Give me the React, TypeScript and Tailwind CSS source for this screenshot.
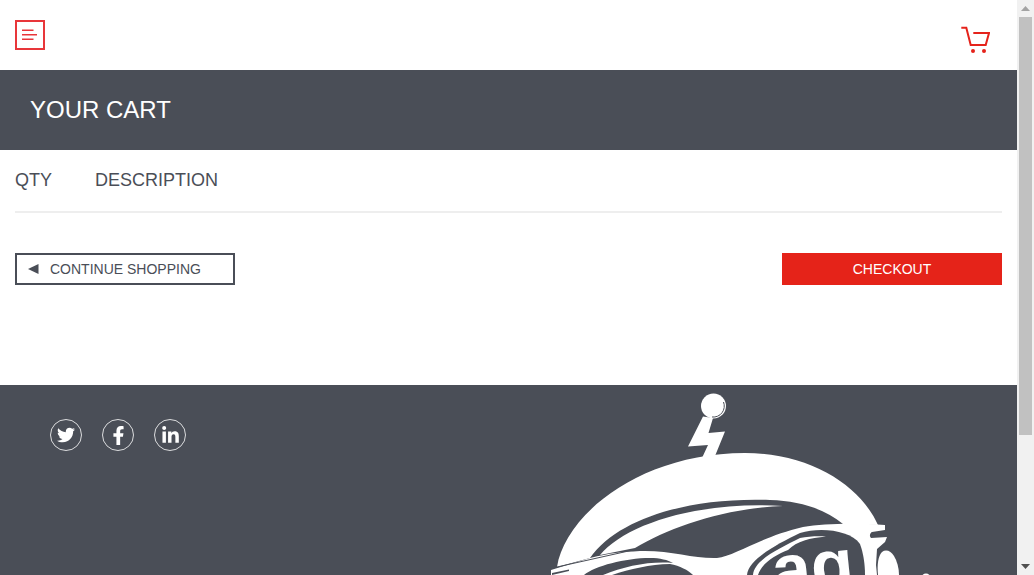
import { FaTwitter, FaFacebookF, FaLinkedinIn } from "react-icons/fa";

function Logo() {
  const bg = "#4a4e57";
  return (
    <svg className="absolute left-[540px] top-0" width="400" height="190" viewBox="540 385 400 190">
      <circle cx="713.5" cy="406" r="12.5" fill="white" />
      <path d="M723.5,402 A11,11 0 0 1 712,417" stroke={bg} strokeWidth="1" fill="none" />
      <path d="M703,416.5 L713,418 L708.5,433 L725,431.5 L715,456 L702,458 L708,445 L688,446.5 Z" fill="white" />
      {/* dome */}
      <path
        d="M557,567 C565,515 640,453 745,453 C810,453 860,485 878,525 L843,524 C825,509 800,501 770,500 C690,497 618,518 590,558 Z"
        fill="white"
      />
      {/* swoosh */}
      <path
        d="M600,555 C625,525 695,501 783,506 C725,508 670,527 635,548 Z"
        fill="white"
      />
      {/* goggles */}
      <path
        d="M551,570 L590,558 C610,553 622,552 640,551 C670,550 695,559 717,558 C735,556 760,537 803,527 C825,523 860,523 885,525 L885,530 L872,532 C870,533 869,536 871,538 L887,537 L885,542 L877,549 L876,565 L877,575 L551,575 Z"
        fill="white"
      />
      <path d="M557,567 L633,550" stroke={bg} strokeWidth="1" fill="none" />
      <path d="M552,573 L569,569.5 L569,571 L552,575 Z" fill={bg} />
      {/* left lens */}
      <path d="M584,575 C595,566 625,558 650,558 C660,558 668,560 673,563 C650,561 625,566 603,575 Z" fill={bg} />
      <path d="M612,575 C630,569 650,564.5 670,564 C680,566 688,570 693,575 Z" fill={bg} />
      {/* right lens */}
      <path
        d="M747,575 C748,560 775,545 800,533 C820,527 850,530 860,544 C863,552 865,563 865,575 Z"
        fill={bg}
      />
      <path d="M753,575 C754,560 780,548 800,538 C808,536.5 817,536 826,536.5 C810,538 797,541 788,550 C775,555 762,563 758,575 Z" fill="white" />
      <text
        x="772"
        y="592"
        fill="white"
        fontSize="70"
        fontWeight="700"
        fontFamily="'Liberation Sans', Arial, sans-serif"
        transform="rotate(-6 800 570)"
      >
        ag
      </text>
      {/* strap */}
      <path d="M878,575 C877,565 878,556 882,552 C886,549 891,551 894,556 C897,561 899,568 899,575 Z" fill="white" />
      <circle cx="926" cy="578" r="4.5" fill="white" />
      <circle cx="1000" cy="578.5" r="4.5" fill="white" />
    </svg>
  );
}

function Social({ children }: { children: React.ReactNode }) {
  return (
    <div className="w-[32px] h-[32px] rounded-full border border-white/80 flex items-center justify-center text-white">
      {children}
    </div>
  );
}

export default function App() {
  return (
    <div className="h-[575px] w-[1034px] flex overflow-hidden bg-white font-['Liberation_Sans',Arial,sans-serif] text-[#4a4e57]">
      <div className="w-[1017px] shrink-0 overflow-hidden">
        <header className="h-[70px] pl-[15px] pr-[27px] flex justify-between">
          <div className="mt-[20px] w-[30px] h-[30px] border-2 border-[#e8363a] flex items-center justify-center">
            <svg width="18" height="14" viewBox="0 0 18 14" fill="none" stroke="#e8363a" strokeWidth="1.6">
              <path d="M1,2.2 H12.5 M1,6.7 H16 M1,11.2 H12.5" />
            </svg>
          </div>
          <svg className="mt-[25px]" width="30" height="29" viewBox="960 25 30 29" fill="none">
            <path d="M961.3,27.8 H966.3 L970.7,45 H985.7 L989,33 H973.3" stroke="#e5231b" strokeWidth="2" />
            <circle cx="973" cy="51" r="2" fill="#e5231b" />
            <circle cx="984" cy="51" r="2" fill="#e5231b" />
          </svg>
        </header>

        <div className="h-[80px] bg-[#4a4e57] flex items-center px-[30px]">
          <h1 className="text-[24px] leading-none text-white font-normal">YOUR CART</h1>
        </div>

        <div className="h-[235px]">
          <div className="mx-[15px] h-[63px] border-b-2 border-[#eeeeee] flex items-center text-[18px]">
            <span className="w-[80px]">QTY</span>
            <span>DESCRIPTION</span>
          </div>
          <div className="mx-[15px] mt-[40px] flex justify-between">
            <button className="w-[220px] h-[32px] border-2 border-[#4a4e57] flex items-center pl-[11px] text-[14px]">
              <svg width="11" height="10" viewBox="0 0 11 10" className="mr-[11px]">
                <path d="M0,5 L10.5,0 V10 Z" fill="#4a4e57" />
              </svg>
              <span>CONTINUE SHOPPING</span>
            </button>
            <button className="w-[220px] h-[32px] bg-[#e52319] text-white text-[14px] flex items-center justify-center">
              CHECKOUT
            </button>
          </div>
        </div>

        <footer className="relative h-[190px] bg-[#4a4e57] overflow-hidden">
          <div className="flex gap-[20px] pl-[50px] pt-[34px]">
            <Social><FaTwitter size={18} /></Social>
            <Social><FaFacebookF size={19} /></Social>
            <Social><FaLinkedinIn size={19} /></Social>
          </div>
          <Logo />
        </footer>
      </div>

      <div className="w-[17px] h-[575px] shrink-0 bg-[#f1f1f1] flex flex-col items-center">
        <div className="h-[17px] flex items-center justify-center">
          <svg width="9" height="5" viewBox="0 0 9 5"><path d="M4.5,0 L9,5 H0 Z" fill="#a3a3a3" /></svg>
        </div>
        <div className="w-[13px] h-[418px] bg-[#c1c1c1]" />
        <div className="flex-1" />
        <div className="h-[17px] flex items-center justify-center">
          <svg width="9" height="5" viewBox="0 0 9 5"><path d="M0,0 H9 L4.5,5 Z" fill="#505050" /></svg>
        </div>
      </div>
    </div>
  );
}
